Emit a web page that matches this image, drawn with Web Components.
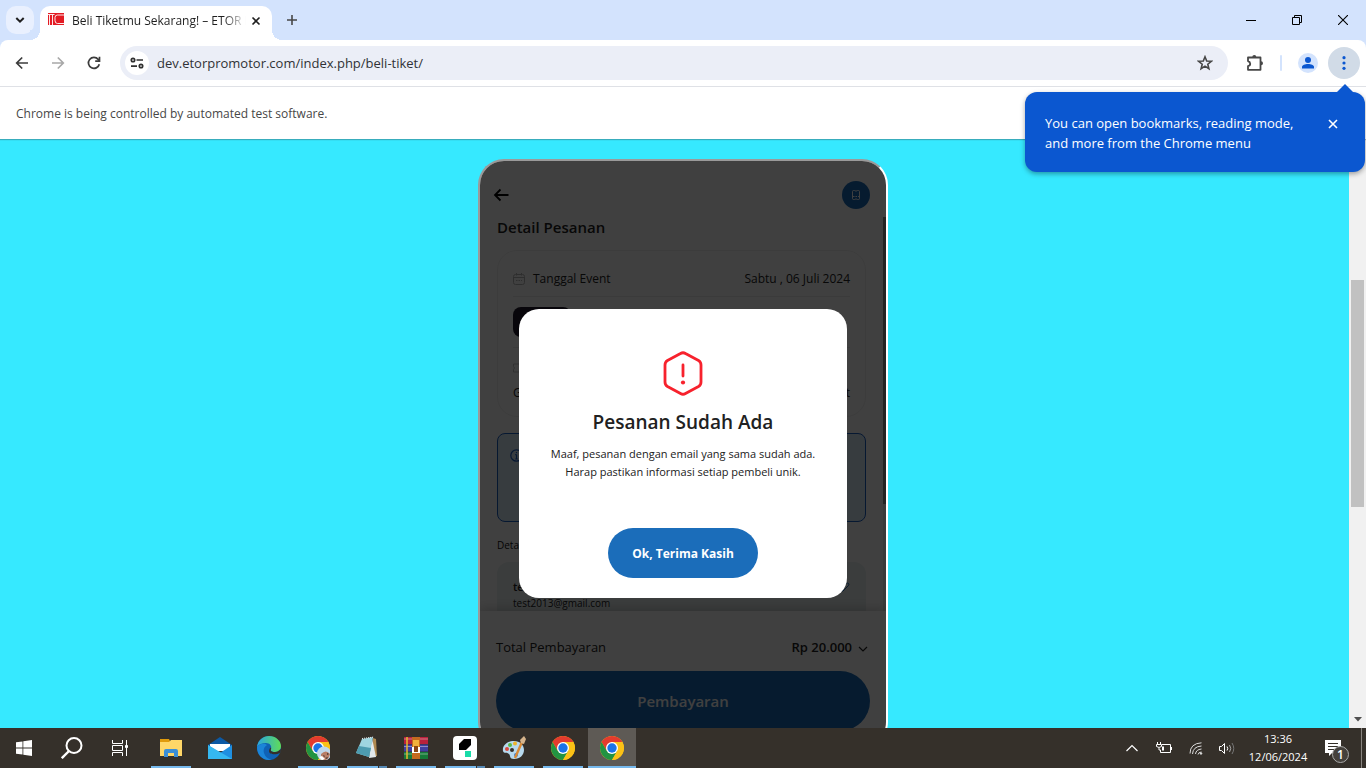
<!DOCTYPE html>
<html lang="id">
<head>
<meta charset="utf-8">
<title>Beli Tiketmu Sekarang! – ETOR Promotor</title>
<style>
  html, body { margin: 0; height: 100%; overflow: hidden; }
  body { font-family: "Open Sans", "Noto Sans", sans-serif; font-size: 12px; color: #1f1f1f; }
</style>
</head>
<body>
<browser-window>
  <tab-strip slot="tabs" label="Beli Tiketmu Sekarang! – ETOR P"></tab-strip>
  <tool-bar slot="toolbar" url="dev.etorpromotor.com/index.php/beli-tiket/">
    <menu-tip>You can open bookmarks, reading mode, and more from the Chrome menu</menu-tip>
  </tool-bar>
  <info-bar slot="info">Chrome is being controlled by automated test software.</info-bar>
  <page-view>
    <phone-frame>
      <order-detail></order-detail>
      <pay-sheet slot="footer"></pay-sheet>
      <alert-modal slot="modal" heading="Pesanan Sudah Ada" action="Ok, Terima Kasih">
        Maaf, pesanan dengan email yang sama sudah ada.<br>Harap pastikan informasi setiap pembeli unik.
      </alert-modal>
    </phone-frame>
  </page-view>
  <task-bar slot="taskbar"></task-bar>
</browser-window>

<script>
const BASE = `
  :host, *, *::before, *::after { box-sizing: border-box; }
  :host([hidden]) { display: none; }
  button { font: inherit; color: inherit; background: none; border: 0; padding: 0; margin: 0; cursor: pointer; }
  svg { display: block; flex: none; }
`;

function define(name, css, html) {
  customElements.define(name, class extends HTMLElement {
    constructor() {
      super();
      const tpl = document.createElement('template');
      const body = typeof html === 'function' ? html(this) : html;
      tpl.innerHTML = `<style>${BASE}${css}</style>${body}`;
      this.attachShadow({ mode: 'open' }).append(tpl.content.cloneNode(true));
    }
  });
}

/* ---------- window ---------- */
define('browser-window', `
  :host { display: flex; flex-direction: column; height: 100vh; background: #fff; }
  .view { flex: 1; min-height: 0; display: flex; }
`, `
  <slot name="tabs"></slot>
  <slot name="toolbar"></slot>
  <slot name="info"></slot>
  <main class="view"><slot></slot></main>
  <slot name="taskbar"></slot>
`);

define('tab-strip', `
  :host { display: flex; height: 40px; background: #d3e3fd; align-items: flex-end; padding-left: 6px; }
  .search { width: 28px; height: 28px; border-radius: 10px; background: #e9f0fe; display: grid; place-items: center; margin-bottom: 6px; }
  .tab { position: relative; display: flex; align-items: center; width: 232px; height: 34px; margin-left: 6px; padding: 0 10px 4px 8px; background: #fff; border-radius: 10px 10px 0 0; }
  .tab::before, .tab::after { content: ""; position: absolute; bottom: 0; width: 10px; height: 10px; }
  .tab::before { right: 100%; background: radial-gradient(circle at 0 0, #d3e3fd 10px, #fff 10px); }
  .tab::after { left: 100%; background: radial-gradient(circle at 100% 0, #d3e3fd 10px, #fff 10px); }
  .name { flex: 1; min-width: 0; margin-left: 8px; white-space: nowrap; font-size: 12px; line-height: 18px; -webkit-mask-image: linear-gradient(90deg, #000 152px, transparent 174px); mask-image: linear-gradient(90deg, #000 152px, transparent 174px); }
  .fav { margin-bottom: 4px; }
  .x { flex: none; margin-left: 4px; width: 12px; height: 16px; display: grid; place-items: center; }
  .new { width: 28px; height: 28px; margin: 0 0 6px 6px; display: grid; place-items: center; }
  .win { display: flex; margin-left: auto; align-self: stretch; }
  .win button { width: 46px; display: grid; place-items: center; }
`, el => `
  <button class="search" aria-label="Search tabs"><svg width="10" height="10" viewBox="0 0 10 10" fill="none" stroke="#1f1f1f" stroke-width="2"><path d="M1.3 3 5 6.7 8.7 3"/></svg></button>
  <div class="tab" role="tab" aria-selected="true">
    <svg class="fav" width="16" height="12" viewBox="0 0 16 12"><path fill="#e31b23" d="M0 0h16v12H0z"/><path fill="none" stroke="#fff" stroke-width=".9" d="M0 1.500h6.500M1.500 2v10M4.500 2v10M16 2H9.500Q7 2 7 4.500v3Q7 10.500 9.500 10.500H16"/></svg>
    <span class="name">${el.getAttribute('label')}</span>
    <button class="x" aria-label="Close tab"><svg width="10" height="10" viewBox="0 0 10 10" stroke="#1f1f1f" stroke-width="1.600"><path d="m1.500 1.500 7 7m0-7-7 7"/></svg></button>
  </div>
  <button class="new" aria-label="New tab"><svg width="12" height="12" viewBox="0 0 12 12" stroke="#474747" stroke-width="1.600"><path d="M6 1v10M1 6h10"/></svg></button>
  <div class="win">
    <button aria-label="Minimize"><svg width="10" height="10" viewBox="0 0 10 10" stroke="#000"><path d="M0 5.500h10"/></svg></button>
    <button aria-label="Restore"><svg width="10" height="10" viewBox="0 0 10 10" fill="none" stroke="#000"><path d="M.5 2.500h7v7h-7zM2.500 2.500v-2h7v7h-2"/></svg></button>
    <button aria-label="Close"><svg width="10" height="10" viewBox="0 0 10 10" stroke="#000" stroke-width="1.100"><path d="m0 0 10 10M10 0 0 10"/></svg></button>
  </div>
`);

define('tool-bar', `
  :host { position: relative; z-index: 2; display: block; background: #d3e3fd; }
  .bar { display: flex; align-items: center; height: 47px; padding: 0 6px 1px 6px; background: #fff; border-radius: 8px 8px 0 0; border-bottom: 1px solid #dfe1e6; }
  .nav { width: 32px; height: 32px; margin-right: 4px; display: grid; place-items: center; }
  .omni { flex: 1; display: flex; align-items: center; height: 34px; margin-left: 6px; padding: 0 15px 0 5px; border-radius: 17px; background: #ebeef7; }
  .site { width: 24px; height: 24px; border-radius: 50%; background: #fff; display: grid; place-items: center; }
  input { flex: 1; min-width: 0; margin: 0 0 0 8px; padding: 0; border: 0; outline: 0; background: none; font: inherit; font-size: 13px; line-height: 20px; color: #303236; }
  .ext { margin-left: 17px; }
  .sep { width: 2px; height: 16px; margin: 0 16px 0 15px; background: #d3e3fd; border-radius: 1px; }
  .who { width: 20px; height: 20px; border-radius: 50%; background: #d3e3fd; }
  .menu { width: 32px; height: 32px; margin-left: 10px; border-radius: 50%; background: #d1dbe7; display: grid; place-items: center; }
`, el => `
  <div class="bar">
    <button class="nav" aria-label="Back"><svg width="14" height="14" viewBox="0 0 14 14" fill="none" stroke="#3c3c3c" stroke-width="1.700"><path d="M13 7H2M7.200 1.500 1.700 7l5.500 5.500"/></svg></button>
    <button class="nav" aria-label="Forward"><svg width="14" height="14" viewBox="0 0 14 14" fill="none" stroke="#a8a8a8" stroke-width="1.700"><path d="M1 7h11M6.800 1.500 12.300 7l-5.500 5.500"/></svg></button>
    <button class="nav" aria-label="Reload"><svg width="14" height="14" viewBox="0 0 14 14" fill="none" stroke="#3c3c3c" stroke-width="1.700"><path d="M12.300 8.200A5.500 5.500 0 1 1 11.200 3.400L12.400 5"/><path d="M12.500.8V5.200H8.200"/></svg></button>
    <div class="omni">
      <button class="site" aria-label="Site information"><svg width="14" height="12" viewBox="0 0 14 12" fill="none" stroke="#303030" stroke-width="1.700"><circle cx="3" cy="3" r="1.700"/><path d="M6.500 3H13M1 9.200h6"/><circle cx="11" cy="9" r="1.700"/></svg></button>
      <input type="text" aria-label="Address" value="${el.getAttribute('url')}">
      <button aria-label="Bookmark"><svg width="16" height="16" viewBox="0 0 16 16" fill="none" stroke="#474747" stroke-width="1.600"><path d="m8 1.800 1.700 4.200 4.600.3-3.500 2.900 1.100 4.500L8 11.200l-3.900 2.500 1.100-4.500L1.700 6.300 6.300 6z"/></svg></button>
    </div>
    <button class="ext" aria-label="Extensions"><svg width="20" height="18" viewBox="0 0 20 18"><path fill="none" stroke="#474747" stroke-width="1.800" stroke-linejoin="round" d="M3 3.500h12.500v12.300H3v-3.600q2.200-.6 2.200-2.500T3 7.100z"/><path fill="#474747" d="M7.300 3a2 2 0 0 1 4 0zM16 7.300a2 2 0 0 1 0 4z"/></svg></button>
    <span class="sep"></span>
    <button class="who" aria-label="Profile"><svg width="20" height="20" viewBox="0 0 20 20" fill="#0b57d0"><circle cx="10" cy="7" r="3"/><path d="M4 15.500V14c0-2 3-3 6-3s6 1 6 3v1.500z"/></svg></button>
    <button class="menu" aria-label="Menu"><svg width="4" height="14" viewBox="0 0 4 14" fill="#0b57d0"><circle cx="2" cy="1.700" r="1.600"/><circle cx="2" cy="7" r="1.600"/><circle cx="2" cy="12.300" r="1.600"/></svg></button>
  </div>
  <slot></slot>
`);

define('menu-tip', `
  :host { position: absolute; right: 1px; top: 52px; width: 340px; display: flex; align-items: flex-start; justify-content: space-between; padding: 21px 26px 19px 20px; border-radius: 12px; background: #0b57d0; color: #fff; font-size: 13px; font-weight: 500; line-height: 20px; box-shadow: 0 2px 5px rgba(0,0,0,.35); }
  :host::before { content: ""; position: absolute; right: 12px; bottom: 100%; border: 8px solid transparent; border-top: 0; border-bottom-color: #0b57d0; }
  .text { width: 262px; }
  button { height: 22px; display: grid; place-items: center; }
`, `
  <span class="text"><slot></slot></span>
  <button aria-label="Dismiss"><svg width="12" height="12" viewBox="0 0 12 12" stroke="#fff" stroke-width="1.600"><path d="m2 2 8 8m0-8-8 8"/></svg></button>
`);

define('info-bar', `
  :host { position: relative; z-index: 1; display: flex; align-items: center; height: 52px; padding: 2px 0 0 16px; background: #fff; color: #474747; font-size: 12px; line-height: 18px; box-shadow: 0 1px 1px rgba(60,64,67,.35); }
`, `<slot></slot>`);

/* ---------- page ---------- */
define('page-view', `
  :host { flex: 1; display: flex; min-width: 0; overflow: hidden; background: #36e9ff; }
  .content { flex: 1; min-width: 0; padding: 20px 0 0 17px; display: flex; justify-content: center; }
  .bar { width: 17px; display: flex; flex-direction: column; align-items: center; background: #f1f1f1; padding-bottom: 6px; }
  .thumb { width: 13px; height: 39%; margin: 141px 0 auto; background: #c1c1c1; }
`, `
  <div class="content"><slot></slot></div>
  <div class="bar"><div class="thumb"></div><svg width="8" height="5" viewBox="0 0 8 5"><path fill="#505050" d="M0 0h8L4 4.500z"/></svg></div>
`);

define('phone-frame', `
  :host { position: relative; display: flex; flex-direction: column; flex: none; width: 410px; height: calc(100% + 20px); border: 2px solid; border-color: #9a9a9a #fff #fff #9a9a9a; border-radius: 26px; background: #fff; overflow: hidden; }
  .body { flex: 1; min-height: 0; overflow: hidden; }
  .veil { position: absolute; inset: 0; background: rgba(0,0,0,.75); display: grid; place-items: center; }
`, `
  <div class="body"><slot></slot></div>
  <slot name="footer"></slot>
  <div class="veil"><slot name="modal"></slot></div>
`);

define('order-detail', `
  :host { display: block; padding-top: 20px; color: #222; }
  header { display: flex; justify-content: space-between; align-items: center; padding: 0 16px 0 13px; }
  .ticket { width: 28px; height: 28px; border-radius: 50%; background: #1b6dba; display: grid; place-items: center; }
  .scroll { display: flex; margin-top: 8px; }
  .list { flex: 1; min-width: 0; padding: 0 17px; }
  .rail { width: 3px; background: #e6e6e6; }
  .rail i { display: block; height: 287px; background: #8c8c8c; }
  h1 { margin: 0; font-size: 15px; line-height: 20px; font-weight: 600; }
  .card { margin-top: 13px; padding: 18px 15px 13px; border: 1px solid #f0f0f0; border-radius: 20px; }
  .row { display: flex; align-items: center; font-size: 12px; line-height: 20px; }
  .row span { margin-left: 8px; }
  .row .end { margin-left: auto; }
  .line { height: 1px; margin: 7px 0 10px; background: #ececec; }
  .poster { width: 58px; height: 30px; margin-bottom: 10px; border-radius: 8px; background: #201b2c; }
  .package { margin-top: 5px; }
  .note { height: 89px; margin-top: 16px; padding: 15px 12px; border: 1px solid #1b5fc4; border-radius: 8px; background: #dcedfb; }
  h2 { margin: 15px 0 0; font-size: 10px; line-height: 16px; font-weight: 400; color: #111; }
  .buyer { margin-top: 9px; padding: 16px; height: 90px; border-radius: 12px; background: #eaf2f2; font-size: 10px; line-height: 14px; }
  .buyer b { font-size: 11px; line-height: 18px; font-weight: 600; }
  .buyer div { display: flex; justify-content: space-between; align-items: center; }
`, `
  <header>
    <button aria-label="Kembali"><svg width="16" height="14" viewBox="0 0 16 14" fill="none" stroke="#000" stroke-width="1.800"><path d="M15.500 7H2M7.500 1.500 2 7l5.500 5.500"/></svg></button>
    <button class="ticket" aria-label="Tiket"><svg width="8" height="10" viewBox="0 0 8 10" fill="none" stroke="#fff"><path d="M1.500.5h1q1.500 1.300 3 0h1q1 0 1 1v7q0 1-1 1h-1q-1.500-1.300-3 0h-1q-1 0-1-1v-7q0-1 1-1z"/><path stroke-dasharray="1.500 1" d="M1 6.500h6"/></svg></button>
  </header>
  <div class="scroll">
    <div class="list">
      <h1>Detail Pesanan</h1>
      <section class="card">
        <div class="row"><svg width="12" height="12" viewBox="0 0 12 12" fill="none" stroke="#b9b9b9"><rect x=".5" y="1.500" width="11" height="10" rx="2"/><path d="M.5 4.500h11M3.500 0v2.500M8.500 0v2.500"/><path stroke-dasharray="1.500 1" d="M3 7.500h6"/></svg><span>Tanggal Event</span><span class="end">Sabtu , 06 Juli 2024</span></div>
        <div class="line"></div>
        <div class="poster"></div>
        <div class="line"></div>
        <div class="row"><svg width="14" height="20" viewBox="0 0 14 20" fill="none" stroke="#c4c4c4"><path d="M.5 6h13v2.500q-2 1.500 0 3V14H.5v-2.500q2-1.500 0-3z"/></svg></div>
        <div class="row package">G<span class="end">t</span></div>
      </section>
      <section class="note"><svg width="13" height="13" viewBox="0 0 13 13" fill="none" stroke="#1b5fc4" stroke-width="1.200"><circle cx="6.500" cy="6.500" r="5.700"/><path d="M6.500 5.500V10M5.200 5.700h1.300M5.200 10h2.600M6.500 3v1.200"/></svg></section>
      <h2>Detail</h2>
      <section class="buyer">
        <div><b>test</b><svg width="10" height="10" viewBox="0 0 10 10" fill="none" stroke="#1b6dba"><path d="M1 9V7l5.500-5.500q1.200-1 2 0t0 2L3 9z"/></svg></div>
        test2013@gmail.com
      </section>
    </div>
    <div class="rail"><i></i></div>
  </div>
`);

define('pay-sheet', `
  :host { display: block; position: relative; padding: 24px 16px 15px; background: #fff; color: #222; box-shadow: 0 -3px 10px rgba(0,0,0,.18); }
  .sum { display: flex; align-items: center; font-size: 13px; line-height: 24px; margin-bottom: 12px; padding-right: 2px; }
  .sum b { margin-left: auto; font-weight: 600; }
  .sum svg { margin: 3px 0 0 6px; }
  .pay { display: block; width: 100%; height: 60px; border-radius: 30px; background: #1b6dba; color: #fff; font-size: 15px; font-weight: 600; }
`, `
  <div class="sum"><span>Total Pembayaran</span><b>Rp 20.000</b><svg width="10" height="6" viewBox="0 0 10 6" fill="none" stroke="#222" stroke-width="1.200"><path d="m1 1 4 4 4-4"/></svg></div>
  <button class="pay">Pembayaran</button>
`);

define('alert-modal', `
  :host { display: block; width: 328px; padding: 40px 16px 20px; border-radius: 20px; background: #fff; color: #212121; text-align: center; }
  .hex { margin: 0 auto; }
  h2 { margin: 9px 0 0; font-size: 19px; line-height: 32px; font-weight: 600; }
  p { margin: 7px 0 47px; font-size: 11px; line-height: 18px; }
  button { width: 150px; height: 50px; border-radius: 25px; background: #1b6dba; color: #fff; font-size: 12px; font-weight: 700; }
`, el => `
  <div role="alertdialog" aria-labelledby="t">
    <svg class="hex" width="42" height="48" viewBox="0 0 42 48" fill="none" stroke="#f7222d" stroke-width="2.800" stroke-linejoin="round" stroke-linecap="round"><path d="M18.500 4.500q2.500-1.500 5 0l13 7q2.500 1.500 2.500 4.500v17q0 3-2.500 4.500l-13 7q-2.500 1.500-5 0l-13-7Q3 36 3 33v-17q0-3 2.500-4.500z"/><path d="M21 16v11"/><circle cx="21" cy="33.500" r="2.100" fill="#f7222d" stroke="none"/></svg>
    <h2 id="t">${el.getAttribute('heading')}</h2>
    <p><slot></slot></p>
    <button>${el.getAttribute('action')}</button>
  </div>
`);

/* ---------- taskbar ---------- */
define('task-item', `
  :host { display: block; width: 48px; height: 40px; margin-right: 1px; }
  button { position: relative; width: 100%; height: 100%; display: grid; place-items: center; }
  button::after { content: ""; position: absolute; bottom: 0; left: 4px; right: 4px; height: 2px; }
  :host([open]) button::after { background: #76b9ed; }
  :host([stack]) button::after { background: linear-gradient(90deg, #76b9ed 31px, #35302a 31px, #35302a 32px, #5689b5 32px); }
  :host([active]) button { background: #5e5a55; }
  :host([active]) button::after { left: 0; right: 0; background: #76b9ed; }
`, el => `<button aria-label="${el.getAttribute('name')}"><slot></slot></button>`);

const chrome = extra => `<svg width="24" height="24" viewBox="0 0 24 24"><circle cx="12" cy="12" r="12" fill="#fbc116"/><path fill="#e33b2e" d="M1.610 6A12 12 0 0 1 22.390 6H12L6.800 15z"/><path fill="#229342" d="M1.610 6A12 12 0 0 0 12 24l5.200-9H6.800z"/><path fill="#fbc116" d="M12 24A12 12 0 0 0 22.390 6H12l5.200 9z"/><circle cx="12" cy="12" r="6" fill="#fff"/><circle cx="12" cy="12" r="4.700" fill="#1a73e8"/>${extra || ''}</svg>`;

define('task-bar', `
  :host { display: flex; align-items: stretch; height: 40px; background: #35302a; color: #fff; }
  .sys { width: 48px; display: grid; place-items: center; }
  .apps { display: flex; margin-left: 3px; }
  .tray { display: flex; align-items: center; margin-left: auto; }
  .tray button { width: 32px; height: 40px; display: grid; place-items: center; }
  .tray .volume { width: 30px; }
  .clock { width: 72px; text-align: center; font-size: 11px; line-height: 18px; }
  .tray .note { width: 47px; position: relative; padding-right: 10px; }
  .badge { position: absolute; left: 18px; top: 18px; width: 17px; height: 17px; border: 1px solid #aaa; border-radius: 50%; background: #45413c; font-size: 12px; font-weight: 600; line-height: 15px; text-align: center; }
  .peek { width: 5px; height: 40px; border-left: 1px solid #88847f; }
`, `
  <button class="sys" aria-label="Start"><svg width="16" height="16" viewBox="0 0 16 16" fill="#fff"><path d="M0 2.300 6.500 1.400V7.600H0zM7.300 1.300 16 0v7.600H7.300zM0 8.400h6.500v6.200L0 13.700zM7.300 8.400H16V16l-8.700-1.300z"/></svg></button>
  <button class="sys" aria-label="Search"><svg width="22" height="22" viewBox="0 0 22 22" fill="none" stroke="#fff" stroke-width="2"><circle cx="13" cy="8.500" r="7.500"/><path d="M8 14 .8 21.200" stroke-width="2.400"/></svg></button>
  <button class="sys" aria-label="Task view"><svg width="16" height="16" viewBox="0 0 16 16" fill="none" stroke="#fff"><path d="M.5 0v3.500h10V0M.5 16v-3.500h10V16M.5 5.500h10v5H.5zM14.500 0v16"/><path fill="#fff" d="M13.500 5.500h2v2h-2z"/></svg></button>
  <div class="apps">
    <task-item name="File Explorer" open><svg width="22" height="20" viewBox="0 0 22 20"><path fill="#e09b0c" d="M0 1h9l1 2v3H0z"/><path fill="#ffd768" d="M0 4h9l2-2h11v16H0z"/><path fill="#3c8fd6" d="M4 19v-6q0-2 2-2h10q2 0 2 2v6h-4v-4H8v4z"/></svg></task-item>
    <task-item name="Mail"><svg width="24" height="22" viewBox="0 0 24 22"><path fill="#0c59a4" d="M0 8 12 0l12 8v3H0z"/><path fill="#fff" d="M2 7h20v7H2z"/><path fill="#1f8fe0" d="M0 8v14h24V8l-12 8z"/><path fill="#35b8f1" d="M0 22V8l24 14z"/></svg></task-item>
    <task-item name="Edge"><svg width="24" height="24" viewBox="0 0 24 24"><defs><linearGradient id="e"><stop stop-color="#2aa5e0"/><stop offset="1" stop-color="#5fdc58"/></linearGradient></defs><circle cx="12" cy="12" r="12" fill="#0f62b5"/><path fill="url(#e)" d="M0 11C1 4 6 0 12 0c7 0 12 5 12 10 0 4-3 6-6 6-3 0-5-1-4-3 1-3-1-6-5-6-4 0-7 1-9 4z"/><path fill="#1b85d8" d="M0 11c3-4 8-4 10-2-3 2-4 5-3 8s3 6 8 6.500C7 25.500 0 20 0 11z"/><path fill="#35302a" d="M14 13c-1 2 1 3 4 3 2 0 4-1 5.500-3q1 2-.5 4c-4 2-11 2-11-2 0-1.500 1-3 1.500-3.500q1 .5.500 1.500z"/></svg></task-item>
    <task-item name="Chrome profile" open>${chrome('<circle cx="18" cy="17.500" r="7" fill="#bfd7ea"/><path fill="#b97e66" d="M15 18q5-5 9 0-1 6-6 6.500l-3-3z"/><path fill="#fff" d="m13 21 3-1 3 3-3 1z"/><path fill="#45332e" d="m17 19 2 1-1 1zM21 17l2 1-2 1zM19 22l3-1-1 2z"/>')}</task-item>
    <task-item name="Notepad" open stack><svg width="24" height="24" viewBox="0 0 24 24"><path fill="#b08a52" d="m18 2 3 1 1 17-4 1z"/><path fill="#e2e9ec" d="M17 2 21 21 14 22z"/><path fill="#9fd5e0" d="M7 3 18 1l-4 20-13-4z"/><path fill="#4d9cb0" d="M4 10l12 2-2 9-13-4z"/><path stroke="#eee" stroke-dasharray="1 1" d="M7 2.500 19 1"/></svg></task-item>
    <task-item name="WinRAR" open><svg width="24" height="22" viewBox="0 0 24 22"><path fill="#b8213c" d="M0 0h24v7H0z"/><path fill="#403ea0" d="M0 7.500h24v7H0z"/><path fill="#167a38" d="M0 15h24v7H0z"/><path stroke="#ffffff66" d="M0 2h24M0 9.500h24M0 17h24"/><path stroke="#e9b72c" stroke-width="1.500" d="M3 0v22"/><path fill="#c56a20" d="M8 0h8v22H8z"/><path fill="#f2b13c" d="M9 3h6v7H9z"/><path fill="#fff" d="M8 10h8v6H8z"/><path fill="#8a4514" d="M10 9h4v6h-4z"/></svg></task-item>
    <task-item name="Katalon" open stack><svg width="24" height="24" viewBox="0 0 24 24"><rect width="24" height="24" rx="4" fill="#fff"/><path fill="#000" d="M11 3h7v6l-5 5H6V8z"/><path fill="#19dba8" d="M12 15h6v6h-6z"/></svg></task-item>
    <task-item name="Paint" open><svg width="24" height="24" viewBox="0 0 24 24"><path fill="#b7d9ee" d="M12 5C5 5 0 10 1 15c1 3 4 1 6 3s0 5 5 5c6 0 10-4 10-9s-4-9-10-9z"/><circle cx="5" cy="13" r="2" fill="#d9473b"/><circle cx="8" cy="9" r="2" fill="#58b947"/><circle cx="13" cy="7.500" r="2" fill="#f0b429"/><circle cx="10" cy="14" r="2" fill="#35302a"/><circle cx="14" cy="19" r="2" fill="#3d7fd0"/><path stroke="#d98a36" stroke-width="2.400" d="m20 6-7 16"/><path fill="#d6b48c" d="m18 4 4-4 2 3-2 5-3-1z"/></svg></task-item>
    <task-item name="Chrome" open>${chrome()}</task-item>
    <task-item name="Chrome" active>${chrome()}</task-item>
  </div>
  <div class="tray">
    <button aria-label="Show hidden icons"><svg width="12" height="8" viewBox="0 0 12 8" fill="none" stroke="#fff" stroke-width="1.200"><path d="M.5 7 6 1.500 11.500 7"/></svg></button>
    <button aria-label="Battery"><svg width="16" height="12" viewBox="0 0 16 12" fill="none" stroke="#fff"><path d="M6 2.500h8.500v8h-10V8M15.500 5v3M1.500 0v2M4.500 0v2M.5 2.500h5v2q-2.500 2-5 0zM3 6v2h1.500"/><path fill="#fff" stroke="none" d="M6 4.500h2v4H6z"/></svg></button>
    <button aria-label="Network"><svg width="14" height="13" viewBox="0 0 14 13" fill="none" stroke="#ddd"><path d="M1 11.500Q1 1.500 12.500.8"/><path d="M3.500 12Q4 4.500 12.500 4M6.500 12q.5-4.500 6-5M9 12.500Q9.500 10 12.500 10"/><circle cx="12" cy="11.500" r=".8" fill="#fff"/></svg></button>
    <button class="volume" aria-label="Volume"><svg width="16" height="13" viewBox="0 0 16 13" fill="none" stroke="#fff"><path d="M.5 4.500h2l3-3v10l-3-3h-2zM8 4.500q1.500 2 0 4"/><path stroke="#aaa" d="M10.500 3q2.500 3.500 0 7"/><path stroke="#777" d="M13 1q3.500 5.500 0 11"/></svg></button>
    <div class="clock">13:36<br>12/06/2024</div>
    <button class="note" aria-label="Notifications"><svg width="16" height="16" viewBox="0 0 16 16"><path fill="#fff" d="M0 0h16v13H7l-3 3v-3H0z"/><path stroke="#35302a" d="M3 3.500h10M3 6.500h10M3 9.500h7"/></svg><span class="badge">1</span></button>
    <span class="peek"></span>
  </div>
`);
</script>
</body>
</html>
